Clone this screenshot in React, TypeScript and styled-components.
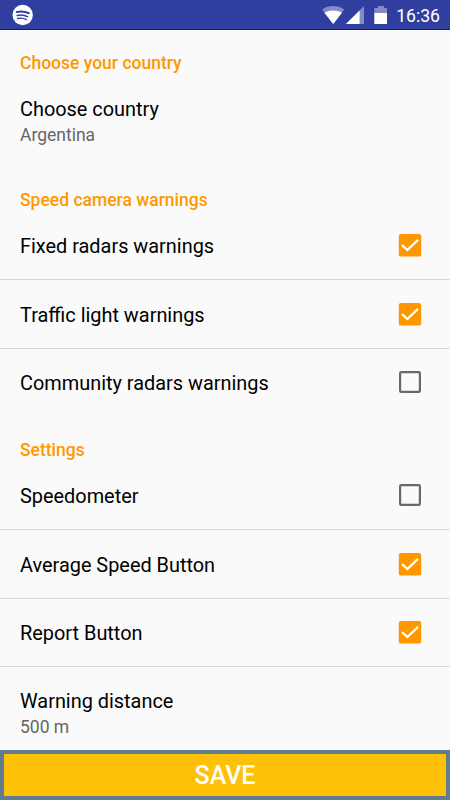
import React from "react";
import styled, { createGlobalStyle } from "styled-components";

const GlobalStyle = createGlobalStyle`
  * { box-sizing: border-box; }
  body { margin: 0; background: #fafafa; font-family: Roboto, "Liberation Sans", sans-serif; }
`;

const Screen = styled.div`
  display: flex;
  flex-direction: column;
  width: 450px;
  height: 800px;
  overflow: hidden;
  background: #fafafa;
`;

const StatusBar = styled.header`
  display: flex;
  align-items: center;
  justify-content: space-between;
  flex: none;
  height: 30px;
  padding: 0 10px 0 12px;
  border-bottom: 1px solid #101a8c;
  background: #303f9f;
  color: #fff;
`;

const StatusIcons = styled.div`
  display: flex;
  align-items: center;
`;

const Clock = styled.span`
  margin-left: 8px;
  padding-top: 2px;
  font-size: 17.6px;
  line-height: 28px;
`;

const Content = styled.main`
  flex: 1;
  min-height: 0;
  overflow: hidden;
`;

const SectionTitle = styled.h2<{ $top: number }>`
  margin: 0;
  padding: ${(p) => p.$top}px 20px 0;
  color: #ff9800;
  font-size: 17.5px;
  font-weight: 500;
  line-height: 22px;
`;

const Row = styled.div<{ $height: number; $divider?: boolean }>`
  display: flex;
  align-items: center;
  justify-content: space-between;
  height: ${(p) => p.$height}px;
  padding: 0 28px 0 20px;
  border-bottom: ${(p) => (p.$divider ? "1px solid #d9d9d9" : "none")};
`;

const Label = styled.div<{ $lead?: number }>`
  padding-top: ${(p) => p.$lead ?? 0}px;
  color: #000;
  font-size: 19.9px;
  line-height: 26px;
`;

const Detail = styled.div<{ $top: number }>`
  height: 95px;
  padding: ${(p) => p.$top}px 20px 0;
`;

const Value = styled.div`
  color: #666;
  font-size: 17.5px;
  line-height: 25px;
`;

const SaveButton = styled.button`
  flex: none;
  height: 50px;
  padding: 0;
  border: 4px solid #607d8b;
  background: #ffc107;
  color: #fff;
  font: 500 25px Roboto, "Liberation Sans", sans-serif;
`;

const CheckIcon = styled.svg<{ $raised?: boolean }>`
  display: block;
  flex: none;
  width: 24px;
  height: 24px;
  margin-bottom: ${(p) => (p.$raised ? 2 : 0)}px;
`;

function Checkbox({ checked, raised }: { checked: boolean; raised?: boolean }) {
  return (
    <CheckIcon viewBox="0 0 24 24" $raised={raised}>
      {checked ? (
        <>
          <rect x="0.8" y="1" width="22.4" height="22.6" rx="2.2" fill="#ff9800" />
          <path d="M4 12.1 9.4 17 20 6.8" fill="none" stroke="#fff" strokeWidth="2.3" />
        </>
      ) : (
        <rect x="2.1" y="2.1" width="19.8" height="19.8" rx="1.1" fill="none" stroke="#696969" strokeWidth="2.2" />
      )}
    </CheckIcon>
  );
}

interface OptionProps {
  label: string;
  checked: boolean;
  height: number;
  divider?: boolean;
  lead?: number;
  raised?: boolean;
}

function Option({ label, checked, height, divider, lead, raised }: OptionProps) {
  return (
    <Row $height={height} $divider={divider}>
      <Label $lead={lead}>{label}</Label>
      <Checkbox checked={checked} raised={raised} />
    </Row>
  );
}

export default function App() {
  return (
    <Screen>
      <GlobalStyle />
      <StatusBar>
        <svg width="22" height="22" viewBox="0 0 22 22">
          <circle cx="10.7" cy="11" r="10.2" fill="#fff" />
          <g fill="none" stroke="#303f9f" strokeLinecap="round">
            <path d="M4.7 8C8.5 7 13 7.3 16.8 9.2" strokeWidth="2" />
            <path d="M5.2 11.5C8.7 10.6 12 10.8 15.5 12.6" strokeWidth="1.6" />
            <path d="M5.7 14.5C8.8 13.8 11.6 14 14.3 15.6" strokeWidth="1.4" />
          </g>
        </svg>
        <StatusIcons>
          <svg width="66" height="29" viewBox="322 0 66 29">
            <path d="M322 9.4C328.5 4.9 338 4.9 344.3 9.4L333.2 24Z" fill="#fff" opacity=".4" />
            <path d="M324.4 12.7C330 9.8 336.5 9.8 342 12.7L333.2 24Z" fill="#fff" />
            <path d="M364 6V24H346Z" fill="#fff" opacity=".4" />
            <path d="M359.6 10.4V24H346Z" fill="#fff" />
            <path d="M374.3 8H378V6H384V8H387V13H374.3Z" fill="#fff" opacity=".4" />
            <path d="M374.3 13H387V24H374.3Z" fill="#fff" />
          </svg>
          <Clock>16:36</Clock>
        </StatusIcons>
      </StatusBar>
      <Content>
        <SectionTitle $top={22}>Choose your country</SectionTitle>
        <Detail $top={23}>
          <Label>Choose country</Label>
          <Value>Argentina</Value>
        </Detail>
        <SectionTitle $top={20}>Speed camera warnings</SectionTitle>
        <Option label="Fixed radars warnings" checked height={69} divider lead={4} />
        <Option label="Traffic light warnings" checked height={69} divider lead={4} />
        <Option label="Community radars warnings" checked={false} height={68} lead={2} raised />
        <SectionTitle $top={22}>Settings</SectionTitle>
        <Option label="Speedometer" checked={false} height={69} divider lead={4} />
        <Option label="Average Speed Button" checked height={69} divider lead={3} />
        <Option label="Report Button" checked height={68} divider lead={2} raised />
        <Detail $top={22}>
          <Label>Warning distance</Label>
          <Value>500 m</Value>
        </Detail>
      </Content>
      <SaveButton>SAVE</SaveButton>
    </Screen>
  );
}
